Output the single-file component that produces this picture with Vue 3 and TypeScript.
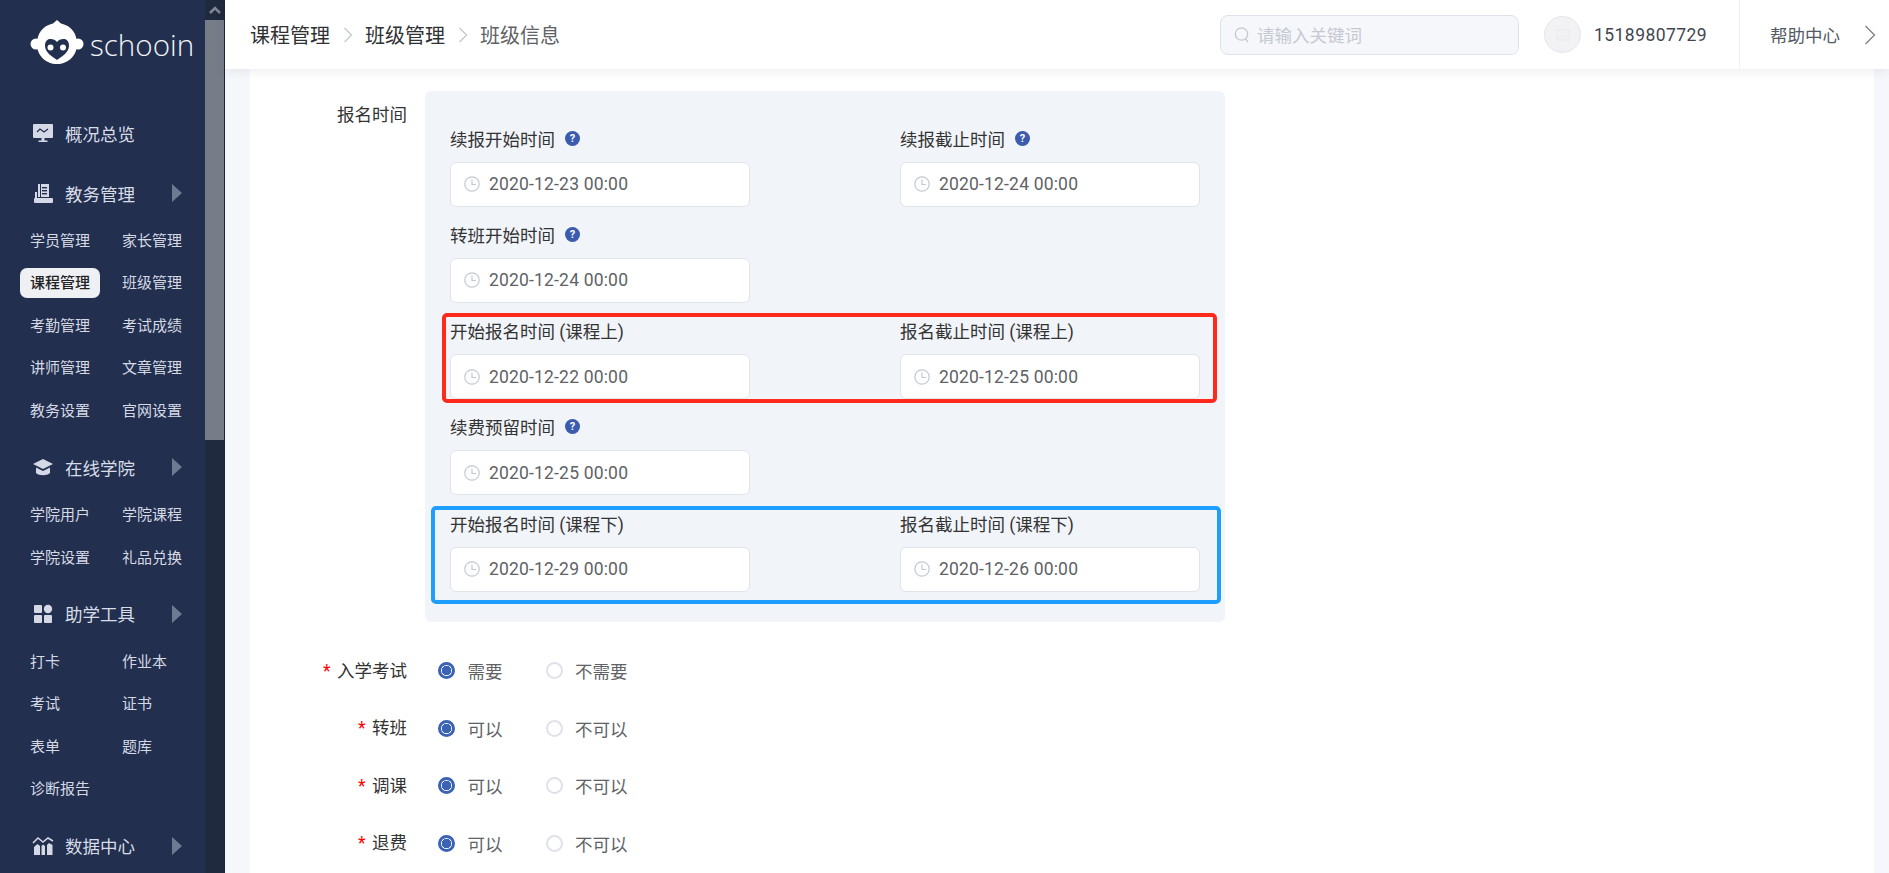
<script setup lang="ts">
interface NavGroup { title: string; icon: string; arrow: boolean; subs: string[] }
const groups: NavGroup[] = [
  { title: '概况总览', icon: 'monitor', arrow: false, subs: [] },
  { title: '教务管理', icon: 'book', arrow: true, subs: ['学员管理', '家长管理', '课程管理', '班级管理', '考勤管理', '考试成绩', '讲师管理', '文章管理', '教务设置', '官网设置'] },
  { title: '在线学院', icon: 'cap', arrow: true, subs: ['学院用户', '学院课程', '学院设置', '礼品兑换'] },
  { title: '助学工具', icon: 'grid', arrow: true, subs: ['打卡', '作业本', '考试', '证书', '表单', '题库', '诊断报告'] },
  { title: '数据中心', icon: 'chart', arrow: true, subs: [] }
]
interface Field { label: string; value: string; help?: boolean }
const fields: (Field | null)[] = [
  { label: '续报开始时间', value: '2020-12-23 00:00', help: true },
  { label: '续报截止时间', value: '2020-12-24 00:00', help: true },
  { label: '转班开始时间', value: '2020-12-24 00:00', help: true },
  null,
  { label: '开始报名时间 (课程上)', value: '2020-12-22 00:00' },
  { label: '报名截止时间 (课程上)', value: '2020-12-25 00:00' },
  { label: '续费预留时间', value: '2020-12-25 00:00', help: true },
  null,
  { label: '开始报名时间 (课程下)', value: '2020-12-29 00:00' },
  { label: '报名截止时间 (课程下)', value: '2020-12-26 00:00' }
]
const radios = [
  { label: '入学考试', yes: '需要', no: '不需要' },
  { label: '转班', yes: '可以', no: '不可以' },
  { label: '调课', yes: '可以', no: '不可以' },
  { label: '退费', yes: '可以', no: '不可以' }
]
</script>

<template>
  <div class="app">
    <aside class="sidebar">
      <nav class="nav">
        <div class="logo">
          <svg class="logo-mark" width="54" height="44" viewBox="0 0 54 44">
            <circle cx="6" cy="24" r="5.5" fill="#fff" />
            <circle cx="48" cy="24" r="5.5" fill="#fff" />
            <path d="M27 0 L31 3.5 C42 6 47 14 47 24 C47 36 38 44 27 44 C16 44 7 36 7 24 C7 14 12 6 23 3.5 Z" fill="#fff" />
            <path d="M27 22 C24 18 15 17 15 25.500 C15 33 23 37 27 40 C31 37 39 33 39 25.500 C39 17 30 18 27 22 Z" fill="#222f4f" />
            <circle cx="20.500" cy="27.500" r="3" fill="#fff" />
            <circle cx="33" cy="27.500" r="3" fill="#fff" />
          </svg>
          <span class="logo-text">schooin</span>
        </div>
        <section v-for="g in groups" :key="g.title" class="group">
          <div class="main-item">
            <svg class="nav-icon" width="22" height="22" viewBox="0 0 22 22">
              <template v-if="g.icon === 'monitor'">
                <rect x="1" y="2" width="20" height="14" rx="1" fill="#d5d9e6" />
                <path d="M5 10 L8 7 L12 10 L16 7" fill="none" stroke="#222f4f" stroke-width="1.300" />
                <path d="M9.500 16 h3 v2.500 h3 v1.500 h-9 v-1.500 h3 z" fill="#d5d9e6" />
              </template>
              <template v-else-if="g.icon === 'book'">
                <path d="M6 2 h11 v13 h-11 z M8 2 v0" fill="#d5d9e6" />
                <rect x="10" y="5" width="5" height="1.400" fill="#222f4f" />
                <rect x="10" y="8" width="5" height="1.400" fill="#222f4f" />
                <rect x="10" y="11" width="5" height="1.400" fill="#222f4f" />
                <rect x="8" y="2" width="1" height="13" fill="#222f4f" />
                <rect x="2" y="16" width="19" height="5" rx="1" fill="#d5d9e6" />
                <rect x="3" y="10" width="2" height="6" fill="#d5d9e6" />
              </template>
              <template v-else-if="g.icon === 'cap'">
                <path d="M11 3 L21 8 L11 13 L1 8 Z" fill="#d5d9e6" />
                <path d="M4 11.500 L11 15 L18 11.500 V17 C15 20 7 20 4 17 Z" fill="#d5d9e6" />
              </template>
              <template v-else-if="g.icon === 'grid'">
                <rect x="2" y="2" width="8" height="8" rx="1" fill="#d5d9e6" />
                <circle cx="16" cy="6" r="4.200" fill="#d5d9e6" />
                <rect x="2" y="12" width="8" height="8" rx="1" fill="#d5d9e6" />
                <rect x="12" y="12" width="8" height="8" rx="1" fill="#d5d9e6" />
              </template>
              <template v-else>
                <path d="M1 8 L6 3 L11 7 L16 3 L21 6" fill="none" stroke="#d5d9e6" stroke-width="1.500" />
                <path d="M2 20 V12 L5.500 9 L8 11 V20 Z M9.500 20 V11 L11 9.500 L13 11 V20 Z M15 20 V10 L17 8 L20.500 10 V20 Z" fill="#d5d9e6" />
              </template>
            </svg>
            <span class="main-label">{{ g.title }}</span>
            <span v-if="g.arrow" class="arrow"></span>
          </div>
          <div v-if="g.subs.length" class="subs">
            <div v-for="s in g.subs" :key="s" class="sub-cell">
              <span class="sub" :class="{ active: s === '课程管理' }">{{ s }}</span>
            </div>
          </div>
        </section>
      </nav>
      <div class="scrollbar">
        <div class="scroll-up">
          <svg width="12" height="8" viewBox="0 0 12 8"><path d="M1 7 L6 2 L11 7" fill="none" stroke="#7f8694" stroke-width="2.500" /></svg>
        </div>
        <div class="scroll-thumb"></div>
      </div>
    </aside>

    <div class="content">
      <header class="header">
        <div class="crumbs">
          <span class="crumb">课程管理</span>
          <svg class="sep" width="10" height="18" viewBox="0 0 10 18"><path d="M1.500 2 L8.500 9 L1.500 16" fill="none" stroke="#c5c9d2" stroke-width="1.400" /></svg>
          <span class="crumb">班级管理</span>
          <svg class="sep" width="10" height="18" viewBox="0 0 10 18"><path d="M1.500 2 L8.500 9 L1.500 16" fill="none" stroke="#c5c9d2" stroke-width="1.400" /></svg>
          <span class="crumb last">班级信息</span>
        </div>
        <div class="search">
          <svg width="16" height="18" viewBox="0 0 16 18"><circle cx="7.500" cy="8" r="6.200" fill="none" stroke="#c4c7d0" stroke-width="1.300" /><path d="M11.500 13 L14 16" stroke="#c4c7d0" stroke-width="1.300" /></svg>
          <span class="placeholder">请输入关键词</span>
        </div>
        <div class="avatar">
          <svg width="14" height="12" viewBox="0 0 14 12"><rect x="1" y="1" width="12" height="10" fill="none" stroke="#ebebee" stroke-width="1.200" /><path d="M2 10 L6 6 L9 9 L11 7 L13 9" fill="none" stroke="#ebebee" /></svg>
        </div>
        <span class="phone">15189807729</span>
        <div class="help">
          <span class="help-text">帮助中心</span>
          <svg width="12" height="22" viewBox="0 0 12 22"><path d="M1.500 2 L10.500 11 L1.500 20" fill="none" stroke="#7c7f88" stroke-width="1.300" /></svg>
        </div>
      </header>

      <main class="body">
        <div class="card">
          <div class="time-row">
            <span class="row-label">报名时间</span>
            <div class="panel">
              <div class="fields">
                <template v-for="(f, i) in fields" :key="i">
                  <div v-if="f" class="field">
                    <div class="field-label">
                      <span>{{ f.label }}</span>
                      <span v-if="f.help" class="help-dot">?</span>
                    </div>
                    <div class="date-input">
                      <svg width="16" height="16" viewBox="0 0 16 16"><circle cx="8" cy="8" r="7.200" fill="none" stroke="#c3c8d3" stroke-width="1.200" /><path d="M8 3.500 V8.500 H12" fill="none" stroke="#c3c8d3" stroke-width="1.200" /></svg>
                      <span class="date-text">{{ f.value }}</span>
                    </div>
                  </div>
                  <div v-else></div>
                </template>
              </div>
              <div class="mark mark-red"></div>
              <div class="mark mark-blue"></div>
            </div>
          </div>

          <div class="radios">
            <div v-for="r in radios" :key="r.label" class="radio-row">
              <span class="row-label radio-label"><i class="star">*</i> {{ r.label }}</span>
              <div class="option first">
                <span class="radio on"></span>
                <span class="opt-text">{{ r.yes }}</span>
              </div>
              <div class="option">
                <span class="radio"></span>
                <span class="opt-text">{{ r.no }}</span>
              </div>
            </div>
          </div>
        </div>
      </main>
    </div>
  </div>
</template>

<style>
html, body { margin: 0; overflow: hidden; }
</style>

<style scoped>
.app {
  display: flex;
  width: 1889px;
  height: 873px;
  overflow: hidden;
  background: #f5f7fb;
  font-family: Roboto, "Noto Sans CJK SC", sans-serif;
  font-size: 17.5px;
  color: #333;
}
.sidebar { display: flex; width: 225px; flex: none; height: 873px; background: #222f4f; }
.nav { width: 205px; flex: none; overflow: hidden; }
.logo { display: flex; align-items: flex-start; height: 108px; padding: 20px 0 0 30px; box-sizing: border-box; }
.logo-mark { flex: none; }
.logo-text { margin: 0 0 0 6px; font-family: "Open Sans", sans-serif; font-size: 29.6px; font-weight: 300; line-height: 50px; color: #f2f3f6; }
.group { margin-bottom: 10px; }
.main-item { display: flex; align-items: center; height: 50px; padding-left: 32px; color: #d8dce6; }
.main-label { width: 70px; margin-left: 11px; white-space: nowrap; }
.arrow { margin-left: 37px; border-left: 10px solid #6f7a90; border-top: 9px solid transparent; border-bottom: 9px solid transparent; }
.subs { display: grid; grid-template-columns: 92px 92px; grid-auto-rows: 42.6px; padding-left: 20px; margin-top: 1.4px; }
.sub-cell { display: flex; align-items: center; }
.sub { display: block; width: 80px; height: 30px; padding-left: 10px; box-sizing: border-box; font-size: 15px; line-height: 30px; color: #d5d9e4; white-space: nowrap; }
.sub.active { background: #eef0f4; border-radius: 7px; color: #222; font-weight: 500; }
.scrollbar { width: 19px; flex: none; background: #1f2a3e; border-right: 1px solid #1b2537; }
.scroll-up { display: flex; align-items: center; justify-content: center; height: 20px; }
.scroll-thumb { height: 420px; background: #767c88; }

.content { flex: 1; min-width: 0; display: flex; flex-direction: column; }
.header { position: relative; z-index: 1; display: flex; align-items: center; height: 69px; flex: none; padding-left: 25px; background: #fff; box-shadow: 0 2px 10px rgba(40, 50, 80, 0.09); }
.crumbs { display: flex; align-items: center; }
.crumb { font-size: 20px; color: #303133; white-space: nowrap; }
.crumb.last { color: #606266; }
.sep { margin: 0 12.5px; }
.search { display: flex; align-items: center; width: 299px; height: 40px; margin-left: auto; padding-left: 13px; box-sizing: border-box; background: #f5f7fb; border: 1px solid #dfe2ec; border-radius: 8px; }
.placeholder { margin-left: 7px; color: #c6c9d2; }
.avatar { display: flex; align-items: center; justify-content: center; width: 37px; height: 37px; margin-left: 25px; box-sizing: border-box; background: #f2f2f4; border: 1px solid #e4e6ec; border-radius: 50%; }
.phone { width: 145px; margin-left: 13px; color: #424650; letter-spacing: 0.45px; }
.help { display: flex; align-items: center; width: 150px; height: 69px; padding-left: 30px; box-sizing: border-box; border-left: 1px solid #eef1f6; }
.help-text { width: 70px; color: #555a65; white-space: nowrap; }
.help svg { margin-left: 24px; }

.body { flex: 1; min-height: 0; padding: 0 15px 0 25px; }
.card { height: 100%; padding-top: 22px; box-sizing: border-box; background: #fff; overflow: hidden; }
.time-row { display: flex; align-items: flex-start; }
.row-label { display: block; width: 157px; flex: none; text-align: right; color: #333; white-space: nowrap; }
.time-row .row-label { line-height: 26px; margin-top: 11px; }
.panel { position: relative; width: 800px; margin-left: 18px; padding: 24.5px 25px 25px; box-sizing: border-box; background: #f1f4f9; border-radius: 6px; }
.fields { display: grid; grid-template-columns: 300px 300px; column-gap: 150px; grid-auto-rows: 96.3px; }
.field-label { display: flex; align-items: center; height: 45px; padding-bottom: 1px; white-space: nowrap; }
.help-dot { display: flex; align-items: center; justify-content: center; width: 15px; height: 15px; margin-left: 10px; border-radius: 50%; background: #3a5bae; color: #fff; font-size: 11px; font-weight: 700; line-height: 15px; }
.date-input { display: flex; align-items: center; height: 45px; padding-left: 13px; box-sizing: border-box; background: #fff; border: 1px solid #dfe3ea; border-radius: 6px; }
.date-text { margin-left: 9px; color: #606266; white-space: nowrap; letter-spacing: 0.18px; }
.mark { position: absolute; box-sizing: border-box; border-width: 4px; border-style: solid; border-radius: 5px; pointer-events: none; }
.mark-red { left: 17px; top: 222px; width: 775px; height: 90px; border-color: #ff2a1c; }
.mark-blue { left: 6px; top: 415px; width: 790px; height: 98px; border-color: #1e9fff; }

.radios { margin-top: 20px; }
.radio-row { display: flex; align-items: center; height: 57.5px; }
.radio-label { line-height: 26px; }
.star { font-style: normal; color: #f00; margin-right: 2px; }
.option { display: flex; align-items: center; }
.option.first { width: 107.5px; margin-left: 31px; }
.radio { width: 17px; height: 17px; flex: none; box-sizing: border-box; border: 2px solid #dfe2ea; border-radius: 50%; background: #fff; }
.radio.on { border: 3px solid #3a62b5; background: radial-gradient(circle, #3a62b5 0 4.500px, #fff 5px); }
.opt-text { margin-left: 12.5px; color: #606266; white-space: nowrap; }
</style>
